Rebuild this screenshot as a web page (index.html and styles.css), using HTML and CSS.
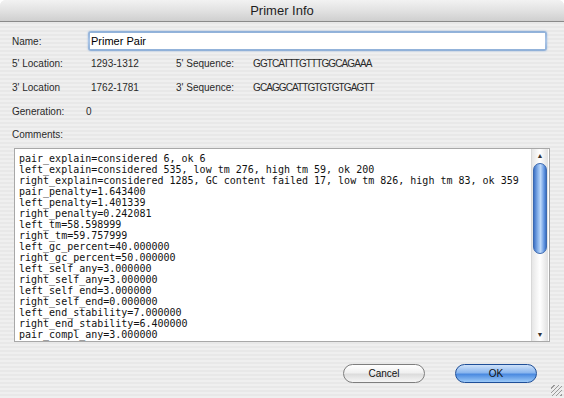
FILE: index.html
```html
<!DOCTYPE html>
<html lang="en">
  <head>
    <meta charset="UTF-8" />
    <title>Primer Info</title>
    <link rel="stylesheet" href="styles.css">
  </head>
  <body>
    <div class="window">
      <div class="titlebar">Primer Info</div>

      <div class="content">
        <div class="row name-row">
          <span class="label name-label">Name:</span>
          <div class="field">
            <input type="text" value="Primer Pair" />
          </div>
        </div>

        <div class="row">
          <span class="label loc-label">5' Location:</span>
          <span class="value loc-value">1293-1312</span>
          <span class="label seq-label">5' Sequence:</span>
          <span class="value seq">GGTCATTTGTTTGGCAGAAA</span>
        </div>

        <div class="row">
          <span class="label loc-label">3' Location</span>
          <span class="value loc-value">1762-1781</span>
          <span class="label seq-label">3' Sequence:</span>
          <span class="value seq">GCAGGCATTGTGTGTGAGTT</span>
        </div>

        <div class="row gen-row">
          <span class="label gen-label">Generation:</span>
          <span class="value">0</span>
        </div>

        <div class="row comments-row">
          <span class="label">Comments:</span>
        </div>

        <div class="comments">
          <pre class="comments-text">pair_explain=considered 6, ok 6
left_explain=considered 535, low tm 276, high tm 59, ok 200
right_explain=considered 1285, GC content failed 17, low tm 826, high tm 83, ok 359
pair_penalty=1.643400
left_penalty=1.401339
right_penalty=0.242081
left_tm=58.598999
right_tm=59.757999
left_gc_percent=40.000000
right_gc_percent=50.000000
left_self_any=3.000000
right_self_any=3.000000
left_self_end=3.000000
right_self_end=0.000000
left_end_stability=7.000000
right_end_stability=6.400000
pair_compl_any=3.000000</pre>
          <div class="scrollbar">
            <div class="arrow up">&#9650;</div>
            <div class="track">
              <div class="thumb"></div>
            </div>
            <div class="arrow down">&#9660;</div>
          </div>
        </div>

        <div class="buttons">
          <button class="btn cancel">Cancel</button>
          <button class="btn ok">OK</button>
        </div>
      </div>

      <div class="grip"></div>
    </div>
  </body>
</html>
```

FILE: styles.css
```css
body {
  margin: 0;
  padding: 0;
  width: 564px;
  height: 398px;
  background-color: #ffffff;
  font-family: "Liberation Sans", Arial, sans-serif;
  color: #222;
  overflow: hidden;
}

.window {
  position: relative;
  width: 564px;
  height: 398px;
  border-radius: 6px 6px 0 0;
  overflow: hidden;
  background: repeating-linear-gradient(
    to bottom,
    #efefef 0,
    #efefef 2px,
    #e8e8e8 2px,
    #e8e8e8 4px
  );
}

.titlebar {
  height: 21px;
  line-height: 22px;
  text-align: center;
  font-size: 13px;
  color: #1e1e1e;
  background: linear-gradient(to bottom, #f2f2f2 0%, #e2e2e2 50%, #cfcfcf 100%);
  border-bottom: 1px solid #8a8a8a;
}

.content {
  padding: 9px 14px 0 12px;
}

.row {
  display: flex;
  align-items: center;
  height: 24px;
  font-size: 10px;
}

.name-row {
  height: 20px;
}

.gen-row {
  height: 25px;
}

.comments-row {
  height: 20px;
}

.label {
  color: #2a2a2a;
}

.value {
  color: #2a2a2a;
}

.name-label {
  width: 76px;
}

.loc-label {
  width: 79px;
}

.loc-value {
  width: 85px;
}

.seq-label {
  width: 77px;
}

.seq {
  letter-spacing: -0.9px;
}

.gen-label {
  width: 74px;
}

.field {
  flex: 1;
  height: 16px;
  margin-right: 3px;
  padding: 2px;
  border-radius: 3px;
  background: linear-gradient(to bottom, #8fb0d8, #a9c4e6 50%, #8fb0d8);
  box-shadow: 0 0 2px #9ab8e0;
}

.field input {
  box-sizing: border-box;
  width: 100%;
  height: 16px;
  margin: 0;
  padding: 0 0 0 1px;
  border: none;
  outline: none;
  background-color: #ffffff;
  font-family: "Liberation Sans", Arial, sans-serif;
  font-size: 11px;
  color: #000;
}

.comments {
  display: flex;
  height: 192px;
  margin: 4px 0 0 2px;
  border: 1px solid #a8a8a8;
  background-color: #ffffff;
}

.comments-text {
  flex: 1;
  margin: 0;
  padding: 4px 0 0 4px;
  font-family: "DejaVu Sans Mono", monospace;
  font-size: 10px;
  line-height: 11px;
  color: #111;
  overflow: hidden;
}

.scrollbar {
  display: flex;
  flex-direction: column;
  width: 16px;
  margin-right: 1px;
  border-left: 1px solid #d8d8d8;
  background: linear-gradient(to right, #e6e6e6, #ffffff 50%, #e0e0e0);
}

.arrow {
  height: 13px;
  font-size: 7px;
  line-height: 13px;
  text-align: center;
  color: #333;
}

.track {
  flex: 1;
  padding: 1px 1px 0;
}

.thumb {
  height: 89px;
  border-radius: 7px;
  border: 1px solid #3b69b0;
  background: linear-gradient(to right, #3f73c6, #8fb8ee 35%, #bcd8fa 55%, #5f93e0 85%, #3c6fc0);
}

.buttons {
  display: flex;
  justify-content: flex-end;
  gap: 30px;
  margin-top: 22px;
  padding-right: 13px;
}

.btn {
  width: 82px;
  height: 19px;
  padding: 0;
  border-radius: 10px;
  font-family: "Liberation Sans", Arial, sans-serif;
  font-size: 10px;
  color: #111;
  cursor: pointer;
}

.cancel {
  border: 1px solid #7e7e7e;
  background: linear-gradient(to bottom, #ffffff 0%, #f0f0f0 45%, #dcdcdc 55%, #f6f6f6 100%);
}

.ok {
  border: 1px solid #1f4f98;
  background: linear-gradient(to bottom, #cfe2fa 0%, #8ab6ee 45%, #4b8ae0 55%, #9ccaf8 100%);
}

.grip {
  position: absolute;
  right: 2px;
  bottom: 2px;
  width: 11px;
  height: 11px;
  background: repeating-linear-gradient(
    135deg,
    transparent 0,
    transparent 2px,
    #9a9a9a 2px,
    #9a9a9a 3px
  );
}
```
